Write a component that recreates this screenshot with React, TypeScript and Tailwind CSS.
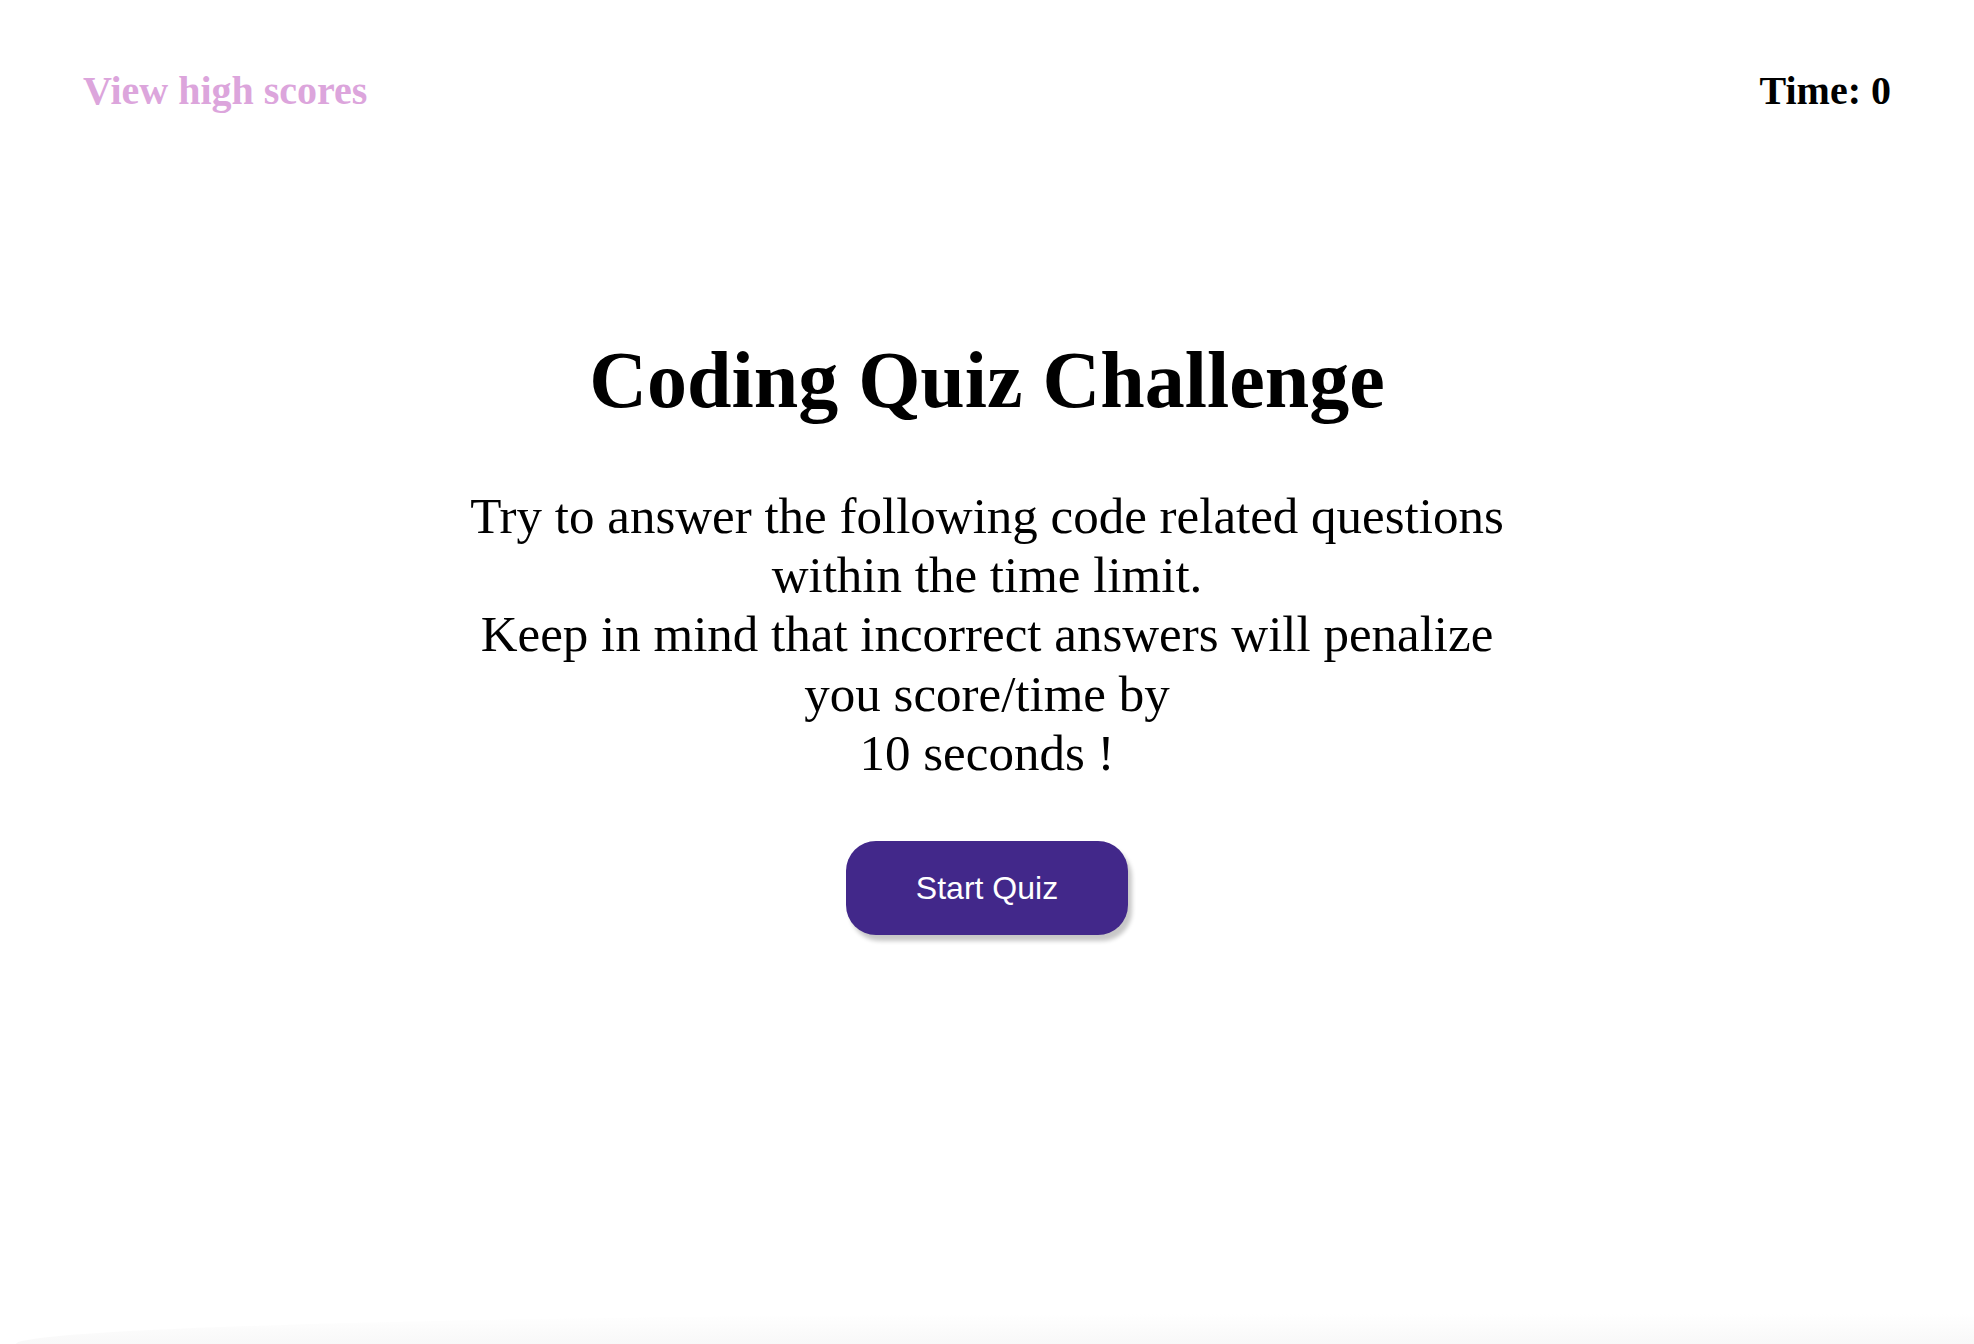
/**
 * Coding quiz landing screen: high-score link, timer, intro text and start button.
 */
export default function App() {
  return (
    <div className="relative min-h-[1344px] bg-white overflow-hidden font-['Liberation_Serif','Times_New_Roman',serif] text-black">
      <header className="flex justify-between items-start px-[83px] pt-[68px]">
        <a href="#" className="text-[40px] font-bold leading-[46px] text-[#dca5dc] no-underline">
          View high scores
        </a>
        <div className="text-[40px] font-bold leading-[46px]">Time: 0</div>
      </header>

      <main className="flex flex-col items-center text-center">
        <h1 className="mt-[220px] text-[80px] font-bold leading-[92px]">Coding Quiz Challenge</h1>
        <p className="mt-[61px] text-[51px] leading-[59.2px] whitespace-nowrap">
          Try to answer the following code related questions
          <br />
          within the time limit.
          <br />
          Keep in mind that incorrect answers will penalize
          <br />
          you score/time by
          <br />
          10 seconds !
        </p>
        <button className="mt-[58px] w-[282px] h-[94px] rounded-[30px] bg-[#42288a] text-white text-[32px] font-['Liberation_Sans',Arial,sans-serif] shadow-[4px_6px_4px_rgba(0,0,0,0.22)]">
          Start Quiz
        </button>
      </main>

      <div className="absolute left-[16px] right-0 bottom-0 h-[30px] rounded-tl-[60%_100%] bg-gradient-to-b from-white to-[#f8f8f8]" />
    </div>
  );
}
